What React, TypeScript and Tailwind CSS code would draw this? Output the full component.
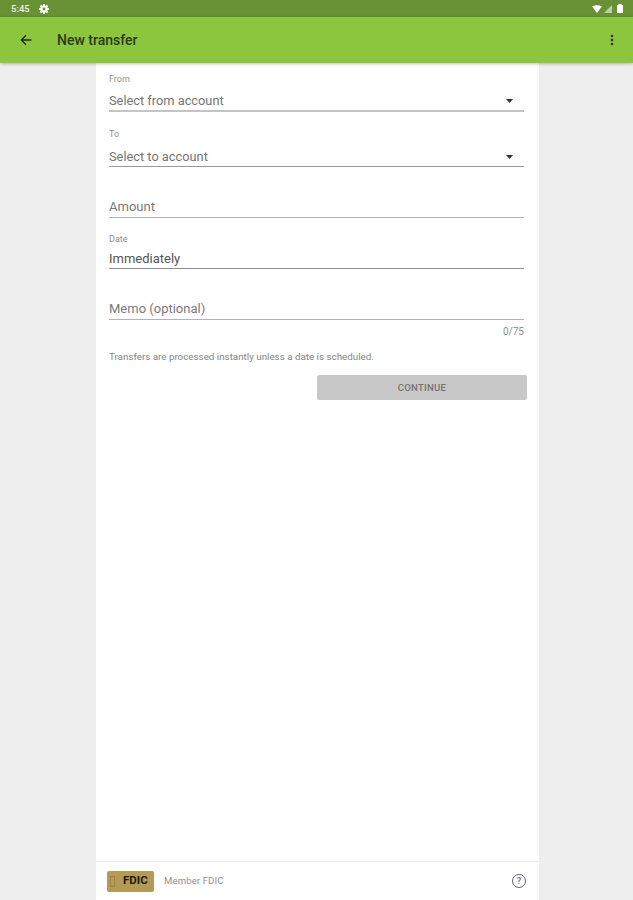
const font = { sans: 'font-["Roboto",sans-serif]' };

function Gear() {
  return (
    <svg width="10" height="10" viewBox="0 0 10 10">
      {[0, 45, 90, 135].map((deg) => (
        <rect key={deg} x="4" y="0" width="2" height="10" fill="#ffffff" transform={`rotate(${deg} 5 5)`} />
      ))}
      <circle cx="5" cy="5" r="3.6" fill="#ffffff" />
      <circle cx="5" cy="5" r="1.4" fill="#689034" />
    </svg>
  );
}

function StatusBar() {
  return (
    <div className="h-[17px] bg-[#689034] flex items-center justify-between pl-[11px] pr-[10px] shrink-0">
      <div className="flex items-center gap-[9px]">
        <span className="text-[9.5px] leading-none font-medium text-[#eef3e4]">5:45</span>
        <Gear />
      </div>
      <div className="flex items-center">
        <svg width="10" height="8" viewBox="0 0 10 8">
          <path d="M0 1.2 Q5 -0.8 10 1.2 L5 8 Z" fill="#ffffff" />
        </svg>
        <svg width="8" height="8" viewBox="0 0 8 8" className="ml-[2px]">
          <path d="M0 8 L8 0 V8 Z" fill="#ffffff" opacity="0.55" />
        </svg>
        <svg width="6" height="9" viewBox="0 0 6 9" className="ml-[5px]">
          <path d="M1.5 0 H4.5 V1 H6 V9 H0 V1 H1.5 Z" fill="#ffffff" />
        </svg>
      </div>
    </div>
  );
}

function AppBar() {
  return (
    <div className="h-[46px] bg-[#8cc63f] flex items-center pl-[18px] pr-[19px] shadow-[0_1px_3px_rgba(0,0,0,0.25)] relative z-10 shrink-0">
      <svg width="16" height="16" viewBox="0 0 24 24" fill="none" stroke="#1d2a10" strokeWidth="2">
        <path d="M20 12H5M12 5l-7 7 7 7" />
      </svg>
      <span className="ml-[23px] text-[14px] font-medium text-[#2a3a18]">New transfer</span>
      <svg width="4" height="12" viewBox="0 0 4 12" className="ml-auto">
        <circle cx="2" cy="2" r="1.3" fill="#2a3a18" />
        <circle cx="2" cy="6" r="1.3" fill="#2a3a18" />
        <circle cx="2" cy="10" r="1.3" fill="#2a3a18" />
      </svg>
    </div>
  );
}

function SelectField({ label, value, className, lineClass }: { label: string; value: string; className: string; lineClass: string }) {
  return (
    <div className={className}>
      <div className="text-[9px] leading-[11px] text-[#8f8f8f]">{label}</div>
      <div className={`mt-[6px] h-[21px] flex items-center justify-between pt-[1px] ${lineClass}`}>
        <span className="text-[12.8px] leading-[18px] text-[#757575]">{value}</span>
        <svg width="7" height="4" viewBox="0 0 7 4" className="mr-[11px]">
          <path d="M0 0 H7 L3.5 4 Z" fill="#333333" />
        </svg>
      </div>
    </div>
  );
}

export default function App() {
  return (
    <div className={`h-[900px] w-[633px] flex flex-col bg-[#eeeeee] overflow-hidden ${font.sans}`}>
      <StatusBar />
      <AppBar />
      <main className="flex-1 w-[443px] ml-[96px] bg-white flex flex-col">
        <div className="flex-1 pl-[13px] pr-[15px] pt-[11px]">
          <SelectField
            label="From"
            value="Select from account"
            className=""
            lineClass="border-b-2 border-b-[#c4c4c4]"
          />
          <SelectField
            label="To"
            value="Select to account"
            className="mt-[17px]"
            lineClass="border-b border-b-[#999999]"
          />

          <div className="mt-[30px] h-[21px] flex items-center border-b border-b-[#b4b4b4]">
            <span className="text-[13px] text-[#7a7a7a]">Amount</span>
          </div>

          <div className="mt-[16px] text-[9px] leading-[11px] text-[#8f8f8f]">Date</div>
          <div className="mt-[3px] h-[21px] flex items-center pt-[1px] border-b border-b-[#8f8f8f]">
            <span className="text-[13px] text-[#555555]">Immediately</span>
          </div>

          <div className="mt-[29px] h-[22px] flex items-center border-b border-b-[#b4b4b4]">
            <span className="text-[13px] text-[#7a7a7a]">Memo (optional)</span>
          </div>
          <div className="mt-[6px] text-right text-[10px] leading-[12px] text-[#8f8f8f]">0/75</div>

          <p className="mt-[13px] text-[9.8px] leading-[12px] text-[#858585]">
            Transfers are processed instantly unless a date is scheduled.
          </p>

          <div className="mt-[12px] flex justify-end -mr-[3px]">
            <button className="w-[210px] h-[25px] pt-[1px] rounded-[2px] bg-[#c8c8c8] text-[9.5px] font-medium text-[#747474] tracking-[0.3px]">
              CONTINUE
            </button>
          </div>
        </div>

        <footer className="h-[39px] border-t border-t-[#eeeeee] flex items-center pl-[11px] pr-[13px] shrink-0">
          <div className="w-[47px] h-[21px] rounded-[2px] bg-[#b59a56] flex items-center pl-[3px]">
            <div className="w-[5px] h-[11px] border border-[#a08642]" />
            <span className="ml-[8px] text-[11.5px] font-bold text-[#1f1a0c] leading-none">FDIC</span>
          </div>
          <span className="ml-[10px] text-[9.6px] text-[#929292] tracking-[0.1px]">Member FDIC</span>
          <div className="ml-auto w-[14px] h-[14px] rounded-full border-[1.5px] border-[#666666] flex items-center justify-center">
            <span className="text-[9px] leading-none font-medium text-[#666666]">?</span>
          </div>
        </footer>
      </main>
    </div>
  );
}
